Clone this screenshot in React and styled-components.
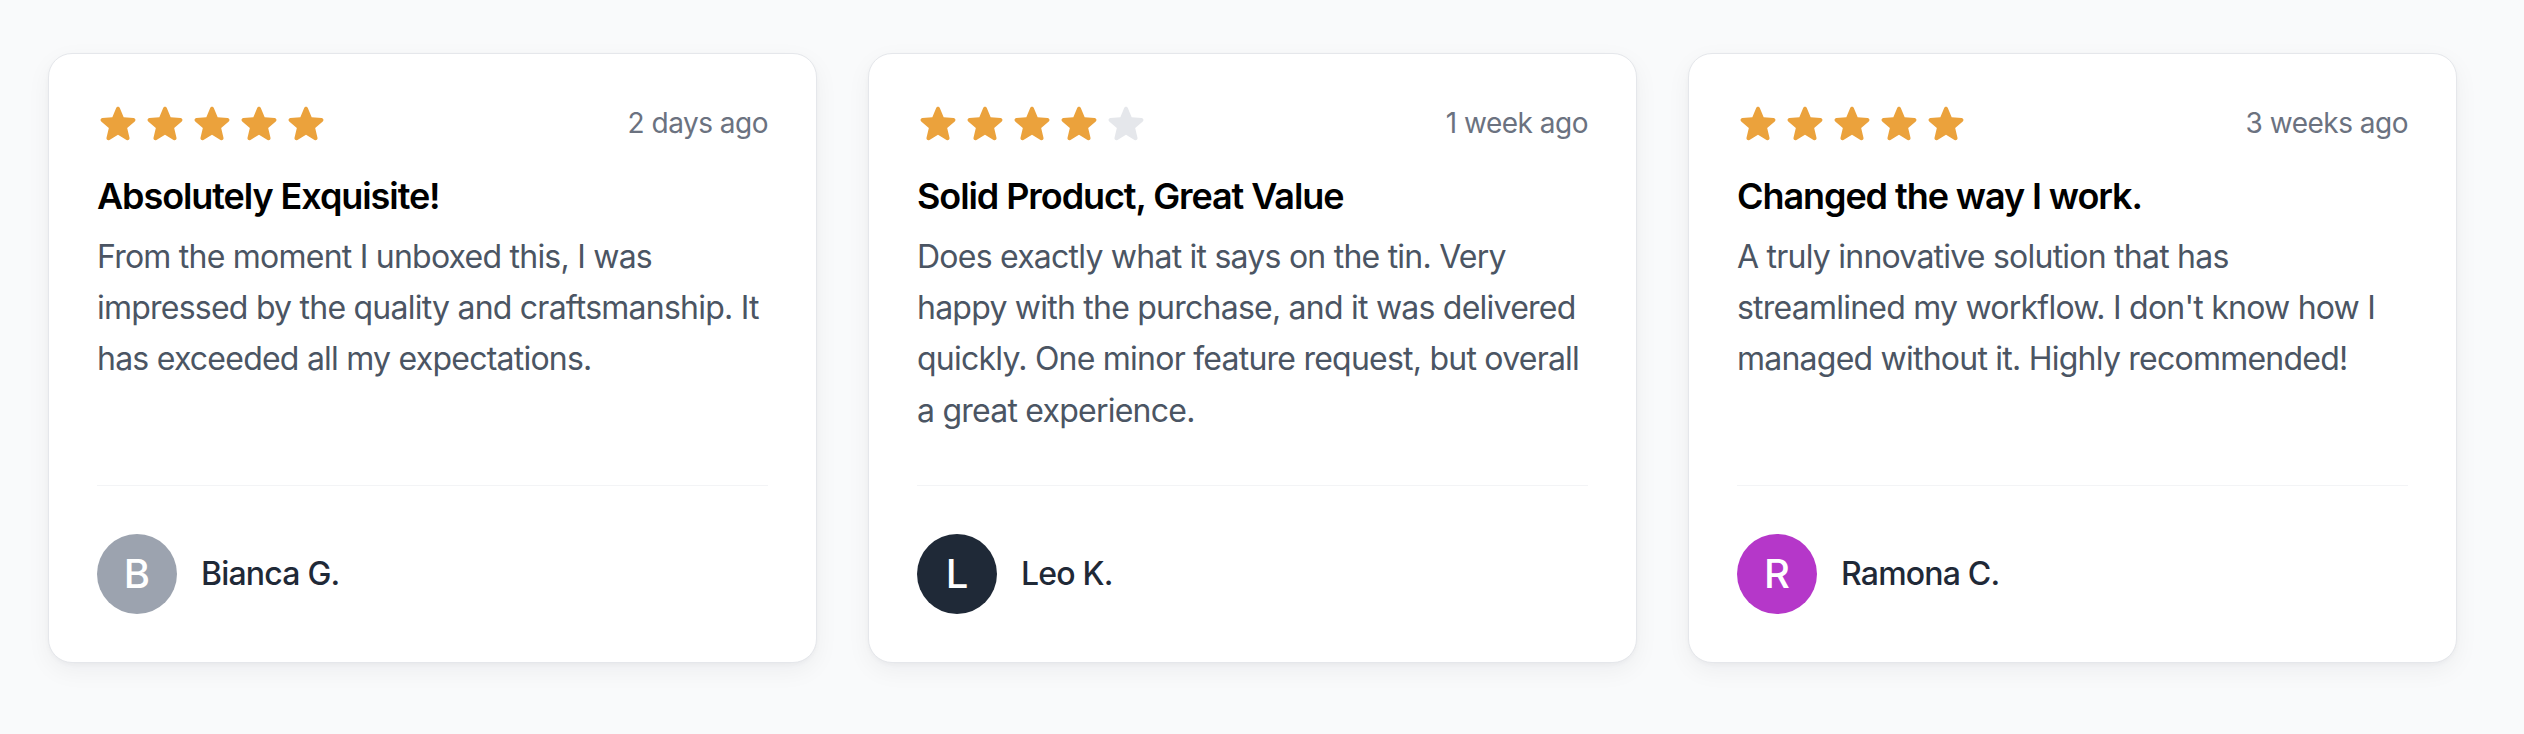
import React from 'react';
import styled, { createGlobalStyle } from 'styled-components';

const GlobalStyle = createGlobalStyle`
  html, body {
    margin: 0;
    padding: 0;
    background: #f9fafb;
  }
  body {
    font-family: Inter, "Noto Sans", "Liberation Sans", sans-serif;
    -webkit-font-smoothing: antialiased;
  }
  * {
    box-sizing: border-box;
  }
`;

const Page = styled.main`
  min-height: 734px;
  padding: 53px 0 0 48px;
`;

const Grid = styled.section`
  display: grid;
  grid-template-columns: repeat(3, 769px);
  gap: 51px;
  align-items: stretch;
`;

const Card = styled.article`
  display: flex;
  flex-direction: column;
  padding: 48px;
  background: #ffffff;
  border: 1px solid #e5e7eb;
  border-radius: 24px;
  box-shadow: 0 8px 24px rgba(17, 24, 39, 0.05), 0 2px 4px rgba(17, 24, 39, 0.03);
`;

const Header = styled.div`
  display: flex;
  align-items: center;
  justify-content: space-between;
`;

const Stars = styled.div`
  display: flex;
  gap: 5px;
`;

const StarIcon = styled.svg`
  width: 42px;
  height: 42px;
  display: block;
  fill: ${({ $filled }) => ($filled ? '#eba23c' : '#e5e7eb')};
`;

const Date = styled.span`
  font-size: 28px;
  letter-spacing: -0.018em;
  color: #6b7280;
`;

const Title = styled.h3`
  margin: 27px 0 0;
  font-size: 36px;
  line-height: 50px;
  font-weight: 600;
  letter-spacing: -0.03em;
  color: #000000;
`;

// lines are kept as in the reference, the fallback font wraps a bit differently
const Body = styled.p`
  margin: 10px 0 0;
  font-size: 32px;
  line-height: 51.2px;
  letter-spacing: -0.024em;
  white-space: pre-line;
  color: #4b5563;
`;

const Spacer = styled.div`
  flex: 1 0 49px;
`;

const Footer = styled.footer`
  display: flex;
  align-items: center;
  gap: 24px;
  padding-top: 48px;
  border-top: 1px solid #f3f4f6;
`;

const Avatar = styled.div`
  flex: none;
  width: 80px;
  height: 80px;
  border-radius: 50%;
  display: flex;
  align-items: center;
  justify-content: center;
  background: ${({ $bg }) => $bg};
  color: #ffffff;
  font-size: 40px;
  font-weight: 500;
`;

const Name = styled.span`
  font-size: 32px;
  font-weight: 500;
  letter-spacing: -0.025em;
  color: #1f2937;
`;

const starPath =
  'M10.868 2.884c-.321-.772-1.415-.772-1.736 0l-1.83 4.401-4.753.381c-.833.067-1.171 1.107-.536 1.651l3.62 3.102-1.106 4.637c-.194.813.691 1.456 1.405 1.02L10 15.591l4.069 2.485c.713.436 1.598-.207 1.404-1.02l-1.106-4.637 3.62-3.102c.635-.544.297-1.584-.536-1.65l-4.752-.382-1.831-4.401Z';

const reviews = [
  {
    rating: 5,
    date: '2 days ago',
    title: 'Absolutely Exquisite!',
    text: [
      'From the moment I unboxed this, I was',
      'impressed by the quality and craftsmanship. It',
      'has exceeded all my expectations.',
    ],
    name: 'Bianca G.',
    color: '#9ca3af',
  },
  {
    rating: 4,
    date: '1 week ago',
    title: 'Solid Product, Great Value',
    text: [
      'Does exactly what it says on the tin. Very',
      'happy with the purchase, and it was delivered',
      'quickly. One minor feature request, but overall',
      'a great experience.',
    ],
    name: 'Leo K.',
    color: '#1f2937',
  },
  {
    rating: 5,
    date: '3 weeks ago',
    title: 'Changed the way I work.',
    text: [
      'A truly innovative solution that has',
      "streamlined my workflow. I don't know how I",
      'managed without it. Highly recommended!',
    ],
    name: 'Ramona C.',
    color: '#b537c9',
  },
];

const Rating = ({ value }) => (
  <Stars>
    {[1, 2, 3, 4, 5].map((i) => (
      <StarIcon key={i} viewBox="0 0 20 20" $filled={i <= value}>
        <path fillRule="evenodd" clipRule="evenodd" d={starPath} />
      </StarIcon>
    ))}
  </Stars>
);

const ReviewCard = ({ review }) => (
  <Card>
    <Header>
      <Rating value={review.rating} />
      <Date>{review.date}</Date>
    </Header>
    <Title>{review.title}</Title>
    <Body>{review.text.join('\n')}</Body>
    <Spacer />
    <Footer>
      <Avatar $bg={review.color}>{review.name[0]}</Avatar>
      <Name>{review.name}</Name>
    </Footer>
  </Card>
);

const App = () => (
  <Page>
    <GlobalStyle />
    <Grid>
      {reviews.map((r) => (
        <ReviewCard key={r.name} review={r} />
      ))}
    </Grid>
  </Page>
);

export default App;
